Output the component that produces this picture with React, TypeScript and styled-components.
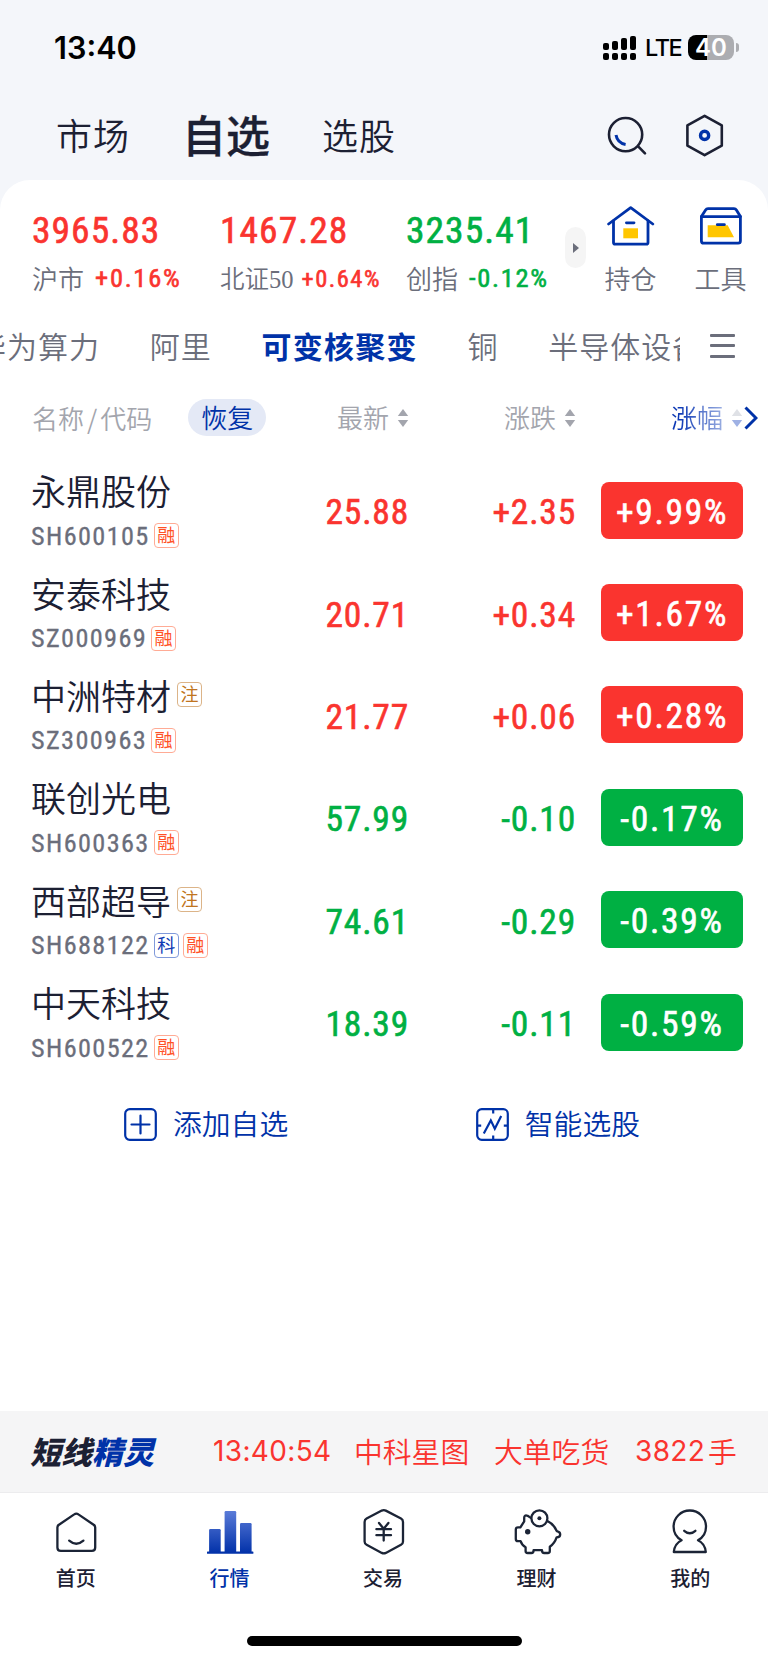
import React from "react";
import styled, { createGlobalStyle, css } from "styled-components";

const ink = "#1c2033";
const gray = "#6b6e7b";
const faint = "#a3a5ad";
const blue = "#0032a8";
const red = "#fa342f";
const green = "#00b043";
const cjk = `"Noto Sans CJK SC", sans-serif`;

const Global = createGlobalStyle`
  * { box-sizing: border-box; }
  body { margin: 0; background: #f4f6fa; }
`;

const din = css`
  font-family: Roboto, ${cjk};
  font-stretch: 75%;
  font-weight: 400;
  -webkit-text-stroke: 0.6px currentColor;
  white-space: nowrap;
`;

const Page = styled.div`
  width: 768px;
  height: 1663px;
  display: flex;
  flex-direction: column;
  overflow: hidden;
  background: #f4f6fa;
  color: ${ink};
  font-family: ${cjk};
  white-space: nowrap;
`;

/* Status bar */
const StatusBar = styled.div`
  height: 88px;
  padding: 7px 29px 0 54px;
  display: flex;
  align-items: center;
  justify-content: space-between;
  font-family: Inter, sans-serif;
  color: #000;
`;
const Clock = styled.span`
  font-size: 30.6px;
  font-weight: 600;
  line-height: 32px;
`;
const StatusRight = styled.div`
  display: flex;
  align-items: center;
`;
const Network = styled.span`
  width: 51px;
  padding-left: 8px;
  font-size: 23.5px;
  font-weight: 500;
  letter-spacing: -1.4px;
  line-height: 26px;
`;
const Battery = styled.div`
  width: 46px;
  height: 25px;
  border-radius: 8px;
  background: linear-gradient(90deg, #000 41%, #acadb1 41%);
  color: #fff;
  font-size: 24px;
  font-weight: 600;
  line-height: 25px;
  text-align: center;
`;
const BatteryCap = styled.i`
  width: 3px;
  height: 9px;
  margin-left: 2px;
  border-radius: 0 4px 4px 0;
  background: #acadb1;
`;

/* Top navigation */
const Nav = styled.nav`
  height: 92px;
  padding: 0 42px 0 56px;
  display: flex;
  align-items: center;
`;
const NavItem = styled.span<{ $active?: boolean; $width: number }>`
  width: ${(p) => p.$width}px;
  font-size: ${(p) => (p.$active ? 44 : 36)}px;
  font-weight: ${(p) => (p.$active ? 500 : 350)};
  letter-spacing: ${(p) => (p.$active ? 0 : 1)}px;
  line-height: 50px;
  -webkit-text-stroke: ${(p) => (p.$active ? "0.3px" : "0")} ${ink};
`;
const NavIcons = styled.div`
  margin-left: auto;
  display: flex;
  gap: 34px;
  padding-top: 2px;
`;

/* White sheet */
const Sheet = styled.main`
  flex: 1;
  display: flex;
  flex-direction: column;
  background: #fff;
  border-radius: 30px 30px 0 0;
`;

const Indices = styled.section`
  height: 128px;
  padding: 23px 0 0 32px;
  display: flex;
`;
const IndexCell = styled.div<{ $width: number; $color: string }>`
  width: ${(p) => p.$width}px;
  flex: none;
  color: ${(p) => p.$color};
`;
const IndexValue = styled.div`
  ${din}
  font-size: 37.5px;
  letter-spacing: 1.05px;
  line-height: 54px;
`;
const IndexLine = styled.div<{ $compact?: boolean }>`
  height: 42px;
  display: flex;
  align-items: center;
  gap: ${(p) => (p.$compact ? 8 : 11)}px;
  padding-top: ${(p) => (p.$compact ? 3 : 0)}px;
`;
const IndexName = styled.span<{ $compact?: boolean }>`
  color: ${gray};
  font-family: ${(p) => (p.$compact ? `"Liberation Serif", ` : "")}${cjk};
  font-size: ${(p) => (p.$compact ? 24.5 : 26)}px;
  font-weight: 350;
  line-height: 32px;
`;
const IndexPct = styled.span<{ $compact?: boolean }>`
  ${din}
  font-size: ${(p) => (p.$compact ? 24.5 : 26.5)}px;
  letter-spacing: ${(p) => (p.$compact ? 1.5 : 1.7)}px;
  line-height: 32px;
  margin-top: -1px;
`;
const MorePill = styled.div`
  width: 21px;
  height: 41px;
  flex: none;
  margin: 24px 18px 0 0;
  display: flex;
  align-items: center;
  justify-content: center;
  border-radius: 11px;
  background: #f5f5f5;
`;
const Shortcut = styled.div`
  width: 53px;
  flex: none;
  margin-right: 37px;
  display: flex;
  flex-direction: column;
  align-items: center;
  color: ${gray};
  font-size: 26px;
  font-weight: 350;
  line-height: 44px;
  svg { margin: 1px 0 8px; flex: none; }
`;

/* Group tabs */
const Groups = styled.section`
  height: 76px;
  display: flex;
  align-items: center;
`;
const GroupScroller = styled.div`
  width: 680px;
  height: 76px;
  padding-bottom: 3px;
  overflow: hidden;
  display: flex;
  align-items: center;
  gap: 49.7px;
`;
const Group = styled.span<{ $active?: boolean; $lead?: boolean }>`
  flex: none;
  margin-left: ${(p) => (p.$lead ? "-24px" : "0")};
  color: ${(p) => (p.$active ? blue : gray)};
  font-size: 30px;
  font-weight: ${(p) => (p.$active ? 700 : 350)};
  letter-spacing: ${(p) => (p.$active ? 1.3 : 1)}px;
  line-height: 40px;
`;
const MenuButton = styled.div`
  margin: 0 0 1px 30px;
  width: 25px;
  height: 24px;
  display: flex;
  flex-direction: column;
  justify-content: space-between;
`;
const MenuBar = styled.i`
  height: 3px;
  border-radius: 1px;
  background: ${gray};
`;

/* Table */
const Head = styled.div`
  height: 75px;
  padding: 0 0 8px 32px;
  display: grid;
  grid-template-columns: 305px 167px 167px 1fr;
  align-items: center;
  color: ${faint};
  font-size: 26px;
  font-weight: 350;
  line-height: 34px;
`;
const HeadName = styled.div`
  display: flex;
  align-items: center;
  gap: 36px;
`;
const Slash = styled.span`
  margin: 0 3px;
`;
const Restore = styled.span`
  width: 78px;
  height: 37px;
  border-radius: 19px;
  background: #e4e9f6;
  color: ${blue};
  text-align: center;
  line-height: 35px;
`;
const HeadCol = styled.div`
  display: flex;
  align-items: center;
  gap: 8px;
  span { margin-top: -1px; }
  svg + svg { margin-left: -7px; }
`;
const Faded = styled.span`
  background: linear-gradient(90deg, #0c38b4 15%, #93a8df 95%);
  background-clip: text;
  -webkit-background-clip: text;
  color: transparent;
`;

const Row = styled.div`
  height: 102.4px;
  padding-left: 31px;
  display: grid;
  grid-template-columns: 240px 137px 167px 26px 142px;
  align-items: center;
`;
const Stock = styled.div`
  display: flex;
  flex-direction: column;
`;
const NameLine = styled.div`
  height: 48px;
  display: flex;
  align-items: center;
  gap: 6px;
  font-size: 35px;
  font-weight: 350;
  line-height: 44px;
`;
const CodeLine = styled.div`
  ${din}
  -webkit-text-stroke-width: 0.3px;
  height: 40px;
  padding-top: 3px;
  display: flex;
  align-items: center;
  color: ${gray};
  font-size: 26.3px;
  letter-spacing: 1.35px;
  line-height: 30px;
  gap: 4px;
`;
const Tag = styled.span<{ $color: string; $edge: string }>`
  width: 25px;
  height: 25px;
  flex: none;
  border: 1px solid ${(p) => p.$edge};
  border-radius: 4px;
  color: ${(p) => p.$color};
  font-family: ${cjk};
  font-size: 18px;
  font-weight: 400;
  -webkit-text-stroke: 0;
  letter-spacing: 0;
  line-height: 21px;
  text-align: center;
`;
const Figure = styled.span<{ $color: string }>`
  ${din}
  color: ${(p) => p.$color};
  font-size: 35.5px;
  letter-spacing: 0.8px;
  padding-top: 4px;
  margin-right: -1px;
  text-align: right;
`;
const Badge = styled.span<{ $color: string }>`
  ${din}
  grid-column: 5;
  height: 57px;
  border-radius: 8px;
  background: ${(p) => p.$color};
  color: #fff;
  font-size: 35.5px;
  letter-spacing: 1.7px;
  line-height: 60px;
  text-align: center;
`;

const Actions = styled.section`
  height: 102px;
  padding: 0 128px 0 124px;
  display: flex;
  align-items: center;
  justify-content: space-between;
`;
const Action = styled.div`
  display: flex;
  align-items: center;
  gap: 16px;
  color: ${blue};
  font-size: 28.8px;
  line-height: 40px;
  font-weight: 350;
  span { margin-top: -3px; }
`;

/* Ticker */
const Ticker = styled.section`
  height: 82px;
  flex: none;
  padding: 0 0 1px 30px;
  display: flex;
  align-items: center;
  background: #f5f5f6;
  border-bottom: 1px solid #ececee;
  color: ${red};
  font-size: 28.8px;
  font-weight: 350;
  line-height: 40px;
`;
const Logo = styled.span`
  width: 183px;
  color: ${ink};
  font-size: 31px;
  font-weight: 900;
  font-style: italic;
  b { color: ${blue}; font-weight: 900; }
`;
const Mono = styled.span<{ $width: number }>`
  width: ${(p) => p.$width}px;
  font-family: Inter, sans-serif;
  font-size: 28px;
  font-weight: 400;
  letter-spacing: 0.35px;
`;
const Phrase = styled.span<{ $width: number }>`
  width: ${(p) => p.$width}px;
`;

/* Tab bar */
const TabBar = styled.footer`
  height: 143px;
  flex: none;
  padding-top: 15px;
  display: grid;
  grid-template-columns: repeat(5, 1fr);
  background: #fff;
`;
const Tab = styled.div<{ $active?: boolean }>`
  display: flex;
  flex-direction: column;
  align-items: center;
  color: ${(p) => (p.$active ? blue : ink)};
  font-size: 20px;
  font-weight: 500;
  line-height: 28px;
  gap: 8px;
  span { margin-right: 2px; }
`;
const HomeArea = styled.div`
  height: 27px;
  flex: none;
  display: flex;
  justify-content: center;
  background: #fff;
`;
const HomeBar = styled.i`
  width: 275px;
  height: 10px;
  border-radius: 5px;
  background: #000;
`;

const Signal = () => (
  <svg width="34" height="26" viewBox="0 0 34 26">
    {[0, 9, 18, 27].map((x, i) => (
      <g key={x}>
        <rect x={x} y={[8, 6, 3, 1][i]} width="6" height={[7, 9, 12, 14][i]} rx="2" />
        <rect x={x} y="18" width="6" height="7" rx="2" />
      </g>
    ))}
  </svg>
);

const Sort = ({ up = faint, down = faint }) => (
  <svg width="12" height="20" viewBox="0 0 12 20">
    <path d="M6 1 L11.2 8 H.8Z" fill={up} />
    <path d="M6 19 L11.2 12 H.8Z" fill={down} />
  </svg>
);

const HouseIcon = () => (
  <svg width="48" height="44" viewBox="0 0 48 44" fill="none" stroke={blue} strokeWidth="2.8" strokeLinecap="round" strokeLinejoin="round">
    <path d="M6.5 17V38.5Q6.5 40.2 8.2 40.2H39.3Q41 40.2 41 38.5V17" />
    <path d="M1.6 20 L23.7 3.6 L45.8 20" />
    <rect x="16.3" y="24.3" width="14.7" height="10" fill="#ffc600" stroke="none" />
    <path d="M19.4 18.8H27" />
  </svg>
);
const ToolsIcon = () => (
  <svg width="48" height="44" viewBox="0 0 48 44" fill="none" stroke={blue} strokeWidth="2.8" strokeLinecap="round" strokeLinejoin="round">
    <path d="M4.4 12.6 L8.6 6 Q9.4 4.7 11 4.7H37Q38.6 4.7 39.4 6 L43.4 12.6" />
    <path d="M4.4 12.6H43.4V37Q43.4 39.2 41.2 39.2H6.6Q4.4 39.2 4.4 37Z" />
    <path d="M10.7 21.3H30.7L37 33.2H10.7Z" fill="#ffc600" stroke="none" />
    <path d="M20.3 20.7H27.4" />
  </svg>
);

const tabStroke = { fill: "none", stroke: "#1b2436", strokeWidth: 2.3, strokeLinecap: "round", strokeLinejoin: "round" } as const;

const TabHome = () => (
  <svg width="48" height="48" viewBox="0 0 48 48" {...tabStroke}>
    <path d="M21.2 6.4 Q23.3 4.9 25.4 6.4 L41 17 Q42.2 18 42.2 19.6V39.5Q42.2 42.9 38.8 42.9H7.8Q4.4 42.9 4.4 39.5V19.6Q4.4 18 5.6 17Z" />
    <path d="M16.2 32.6 Q23.3 38.8 30.4 32.6" />
  </svg>
);
const TabMarket = () => (
  <svg width="48" height="48" viewBox="0 0 48 48">
    <defs>
      <linearGradient id="bars" gradientUnits="userSpaceOnUse" x1="0" y1="3" x2="0" y2="46">
        <stop offset="0" stopColor="#5a7bd8" />
        <stop offset="1" stopColor="#0030a8" />
      </linearGradient>
    </defs>
    <g fill="url(#bars)">
      <rect x="3.1" y="21" width="11.6" height="24" rx="1.2" />
      <rect x="18.6" y="3" width="11.6" height="42" rx="1.2" />
      <rect x="34" y="15" width="11.6" height="30" rx="1.2" />
      <rect x="1" y="43.4" width="46.4" height="2.4" rx="0.6" />
    </g>
  </svg>
);
const TabTrade = () => (
  <svg width="48" height="48" viewBox="0 0 48 48" {...tabStroke}>
    <path d="M21.8 2.6 Q23.8 1.6 25.8 2.6 L41 10.6 Q43 11.7 43 14V33.4Q43 35.7 41 36.8 L25.8 44.9 Q23.8 45.9 21.8 44.9 L6.6 36.8 Q4.6 35.7 4.6 33.4V14Q4.6 11.7 6.6 10.6Z" />
    <path d="M19 15 L23.7 20.8 L28.4 15 M23.7 20.8V32.6 M16.4 21.2H31 M16.4 27.2H31" />
  </svg>
);
const TabWealth = () => (
  <svg width="48" height="48" viewBox="0 0 48 48" {...tabStroke}>
    <path d="M18 10.6 L13.6 7.8 Q10.2 6.6 10.2 9.8 V13.4 L6.4 19.3 H4 Q1.8 19.3 1.8 21.5 V31 Q1.8 33.2 4 33.2 H6.6 Q8 37.4 11.6 39.3 V43 Q11.6 45 13.6 45 H17.4 Q19.6 45 19.6 42.2 H28 Q28 45 30.2 45 H33.8 Q35.8 45 35.8 43 V38.8 Q40.6 35.4 42.6 29.4 Q46.2 29.2 46.2 26.4 Q46.2 24 42.8 23.2 Q40.6 16.8 33 12.8" />
    <circle cx="25.4" cy="10.3" r="8" fill="#fff" />
    <circle cx="25.4" cy="10.3" r="2" fill="#1b2436" stroke="none" />
    <circle cx="13.7" cy="23.7" r="2.7" fill="#1b2436" stroke="none" />
  </svg>
);
const TabMine = () => (
  <svg width="48" height="48" viewBox="0 0 48 48" {...tabStroke}>
    <path d="M14.6 32.2 C9.4 29.4 6.6 24.4 6.6 18.7 A16.2 16.2 0 0 1 39 18.7 C39 24.4 36.2 29.4 31 32.2 Q38 35.6 38.8 44 H6.8 Q7.6 35.6 14.6 32.2Z" />
    <path d="M17.2 22.8 Q22.8 27.8 28.4 22.8" />
  </svg>
);

type TagKind = "rong" | "zhu" | "ke";
const tags: Record<TagKind, { text: string; color: string; edge: string }> = {
  rong: { text: "融", color: "#ff5126", edge: "#ffab95" },
  zhu: { text: "注", color: "#c07420", edge: "#dcb488" },
  ke: { text: "科", color: "#0f3bb4", edge: "#809ada" },
};
const StockTag = ({ kind }: { kind: TagKind }) => (
  <Tag $color={tags[kind].color} $edge={tags[kind].edge}>{tags[kind].text}</Tag>
);

const stocks: { name: string; code: string; note?: boolean; tags: TagKind[]; price: string; diff: string; pct: string }[] = [
  { name: "永鼎股份", code: "SH600105", tags: ["rong"], price: "25.88", diff: "+2.35", pct: "+9.99%" },
  { name: "安泰科技", code: "SZ000969", tags: ["rong"], price: "20.71", diff: "+0.34", pct: "+1.67%" },
  { name: "中洲特材", code: "SZ300963", note: true, tags: ["rong"], price: "21.77", diff: "+0.06", pct: "+0.28%" },
  { name: "联创光电", code: "SH600363", tags: ["rong"], price: "57.99", diff: "-0.10", pct: "-0.17%" },
  { name: "西部超导", code: "SH688122", note: true, tags: ["ke", "rong"], price: "74.61", diff: "-0.29", pct: "-0.39%" },
  { name: "中天科技", code: "SH600522", tags: ["rong"], price: "18.39", diff: "-0.11", pct: "-0.59%" },
];

const indices = [
  { name: "沪市", value: "3965.83", pct: "+0.16%", color: red, width: 188 },
  { name: "北证50", value: "1467.28", pct: "+0.64%", color: red, width: 186, compact: true },
  { name: "创指", value: "3235.41", pct: "-0.12%", color: green, width: 159 },
];

const tabs = [
  { label: "首页", icon: <TabHome /> },
  { label: "行情", icon: <TabMarket />, active: true },
  { label: "交易", icon: <TabTrade /> },
  { label: "理财", icon: <TabWealth /> },
  { label: "我的", icon: <TabMine /> },
];

export default function App() {
  return (
    <Page>
      <Global />
      <StatusBar>
        <Clock>13:40</Clock>
        <StatusRight>
          <Signal />
          <Network>LTE</Network>
          <Battery>40</Battery>
          <BatteryCap />
        </StatusRight>
      </StatusBar>
      <Nav>
        <NavItem $width={126}>市场</NavItem>
        <NavItem $width={140} $active>自选</NavItem>
        <NavItem $width={80}>选股</NavItem>
        <NavIcons>
          <svg width="44" height="44" viewBox="0 0 44 44" fill="none" stroke={ink} strokeWidth="2.6" strokeLinecap="round">
            <circle cx="21.6" cy="21.6" r="16.6" />
            <path d="M34.4 33.6 L41 40.4" />
            <path d="M12 22 Q13.4 30 21.6 31.4" stroke={blue} strokeWidth="3" strokeLinecap="butt" />
          </svg>
          <svg width="44" height="44" viewBox="0 0 44 44" fill="none" stroke={ink} strokeWidth="2.6" strokeLinejoin="round">
            <path d="M22.6 2.8 L39.8 12.4 V32.6 L22.6 42.2 L5.4 32.6 V12.4Z" />
            <circle cx="22.6" cy="22.4" r="4.1" stroke={blue} strokeWidth="3.4" />
          </svg>
        </NavIcons>
      </Nav>
      <Sheet>
        <Indices>
          {indices.map((i) => (
            <IndexCell key={i.name} $width={i.width} $color={i.color}>
              <IndexValue>{i.value}</IndexValue>
              <IndexLine $compact={i.compact}>
                <IndexName $compact={i.compact}>{i.name}</IndexName>
                <IndexPct $compact={i.compact}>{i.pct}</IndexPct>
              </IndexLine>
            </IndexCell>
          ))}
          <MorePill>
            <svg width="8" height="12" viewBox="0 0 8 12"><path d="M1 1 L7 6 L1 11Z" fill={gray} /></svg>
          </MorePill>
          <Shortcut><HouseIcon />持仓</Shortcut>
          <Shortcut><ToolsIcon />工具</Shortcut>
        </Indices>
        <Groups>
          <GroupScroller>
            <Group $lead>华为算力</Group>
            <Group>阿里</Group>
            <Group $active>可变核聚变</Group>
            <Group>铜</Group>
            <Group>半导体设备</Group>
          </GroupScroller>
          <MenuButton><MenuBar /><MenuBar /><MenuBar /></MenuButton>
        </Groups>
        <Head>
          <HeadName>
            <span>名称<Slash>/</Slash>代码</span>
            <Restore>恢复</Restore>
          </HeadName>
          <HeadCol><span>最新</span><Sort /></HeadCol>
          <HeadCol><span>涨跌</span><Sort /></HeadCol>
          <HeadCol>
            <Faded>涨幅</Faded>
            <Sort up="#dfe1e6" down="#9fb1e4" />
            <svg width="14" height="24" viewBox="0 0 14 24" fill="none" stroke={blue} strokeWidth="3"><path d="M1.5 1.5 L12 12 L1.5 22.5" /></svg>
          </HeadCol>
        </Head>
        {stocks.map((s) => {
          const color = s.diff.startsWith("+") ? red : green;
          return (
            <Row key={s.code}>
              <Stock>
                <NameLine>{s.name}{s.note && <StockTag kind="zhu" />}</NameLine>
                <CodeLine>{s.code}{s.tags.map((t) => <StockTag key={t} kind={t} />)}</CodeLine>
              </Stock>
              <Figure $color={color}>{s.price}</Figure>
              <Figure $color={color}>{s.diff}</Figure>
              <Badge $color={color}>{s.pct}</Badge>
            </Row>
          );
        })}
        <Actions>
          <Action>
            <svg width="33" height="33" viewBox="0 0 33 33" fill="none" stroke={blue} strokeWidth="2.2" strokeLinecap="round">
              <rect x="1.2" y="1.2" width="30.6" height="30.6" rx="4.5" />
              <path d="M7.5 16.5H25.5M16.5 7.5V25.5" />
            </svg>
            <span>添加自选</span>
          </Action>
          <Action>
            <svg width="33" height="33" viewBox="0 0 33 33" fill="none" stroke={blue} strokeWidth="2.2">
              <rect x="1.2" y="1.2" width="30.6" height="30.6" rx="4.5" />
              <path d="M17.2 1V5.4M17.2 32V27.4M1 17.6H5.2M32 17.6H27.8" />
              <path d="M7.8 25.4 L14.8 12.4 L18.8 20.8 L25.2 8" />
            </svg>
            <span>智能选股</span>
          </Action>
        </Actions>
      </Sheet>
      <Ticker>
        <Logo>短线<b>精灵</b></Logo>
        <Mono $width={141}>13:40:54</Mono>
        <Phrase $width={140}>中科星图</Phrase>
        <Phrase $width={141}>大单吃货</Phrase>
        <Mono $width={73}>3822</Mono>
        <Phrase $width={30}>手</Phrase>
      </Ticker>
      <TabBar>
        {tabs.map((t) => (
          <Tab key={t.label} $active={t.active}>{t.icon}<span>{t.label}</span></Tab>
        ))}
      </TabBar>
      <HomeArea><HomeBar /></HomeArea>
    </Page>
  );
}
